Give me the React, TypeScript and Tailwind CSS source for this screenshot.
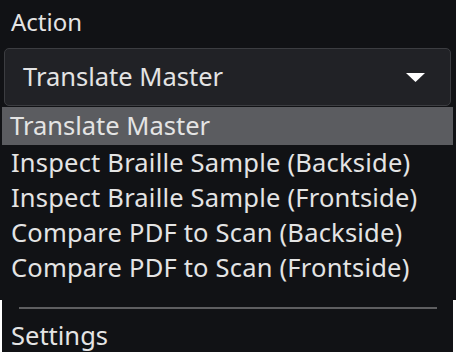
export default function App() {
  const items = [
    "Inspect Braille Sample (Backside)",
    "Inspect Braille Sample (Frontside)",
    "Compare PDF to Scan (Backside)",
    "Compare PDF to Scan (Frontside)",
  ];
  return (
    <div
      className="relative w-[456px] h-[362px] bg-white overflow-hidden text-[#e4e4e4]"
      style={{ fontFamily: '"Noto Sans", "Open Sans", sans-serif' }}
    >
      <div className="h-[300px] bg-[#111215] flex flex-col px-[3px]">
        <div className="h-[48px] flex items-center pl-[8px] pb-[4px] text-[24px] leading-none">Action</div>
        <div className="ml-[1px] mr-[2px] h-[58px] rounded-[5px] border border-[#3c3d41] bg-[#212226] flex items-center justify-between pl-[18px] pr-[25px] text-[25.5px] leading-none">
          <span>Translate Master</span>
          <svg width="19" height="9" viewBox="0 0 19 9">
            <polygon points="0,0 19,0 9.5,9" fill="#ffffff" />
          </svg>
        </div>
      </div>
      <div className="absolute left-[2px] top-[107px] w-[451px] h-[245px] bg-[#111215] flex flex-col text-[25.5px] leading-none">
        <div className="h-[38px] bg-[#5b5c60] flex items-center pl-[8px]">Translate Master</div>
        {items.map((t) => (
          <div key={t} className="h-[35px] flex items-center pl-[9px] tracking-[0.2px]">
            {t}
          </div>
        ))}
        <div className="mt-[22px] ml-[17px] w-[418px] h-[2px] bg-[#5e5e60]" />
        <div className="h-[43px] flex items-center pl-[9px] pt-[10px]">Settings</div>
      </div>
    </div>
  );
}
